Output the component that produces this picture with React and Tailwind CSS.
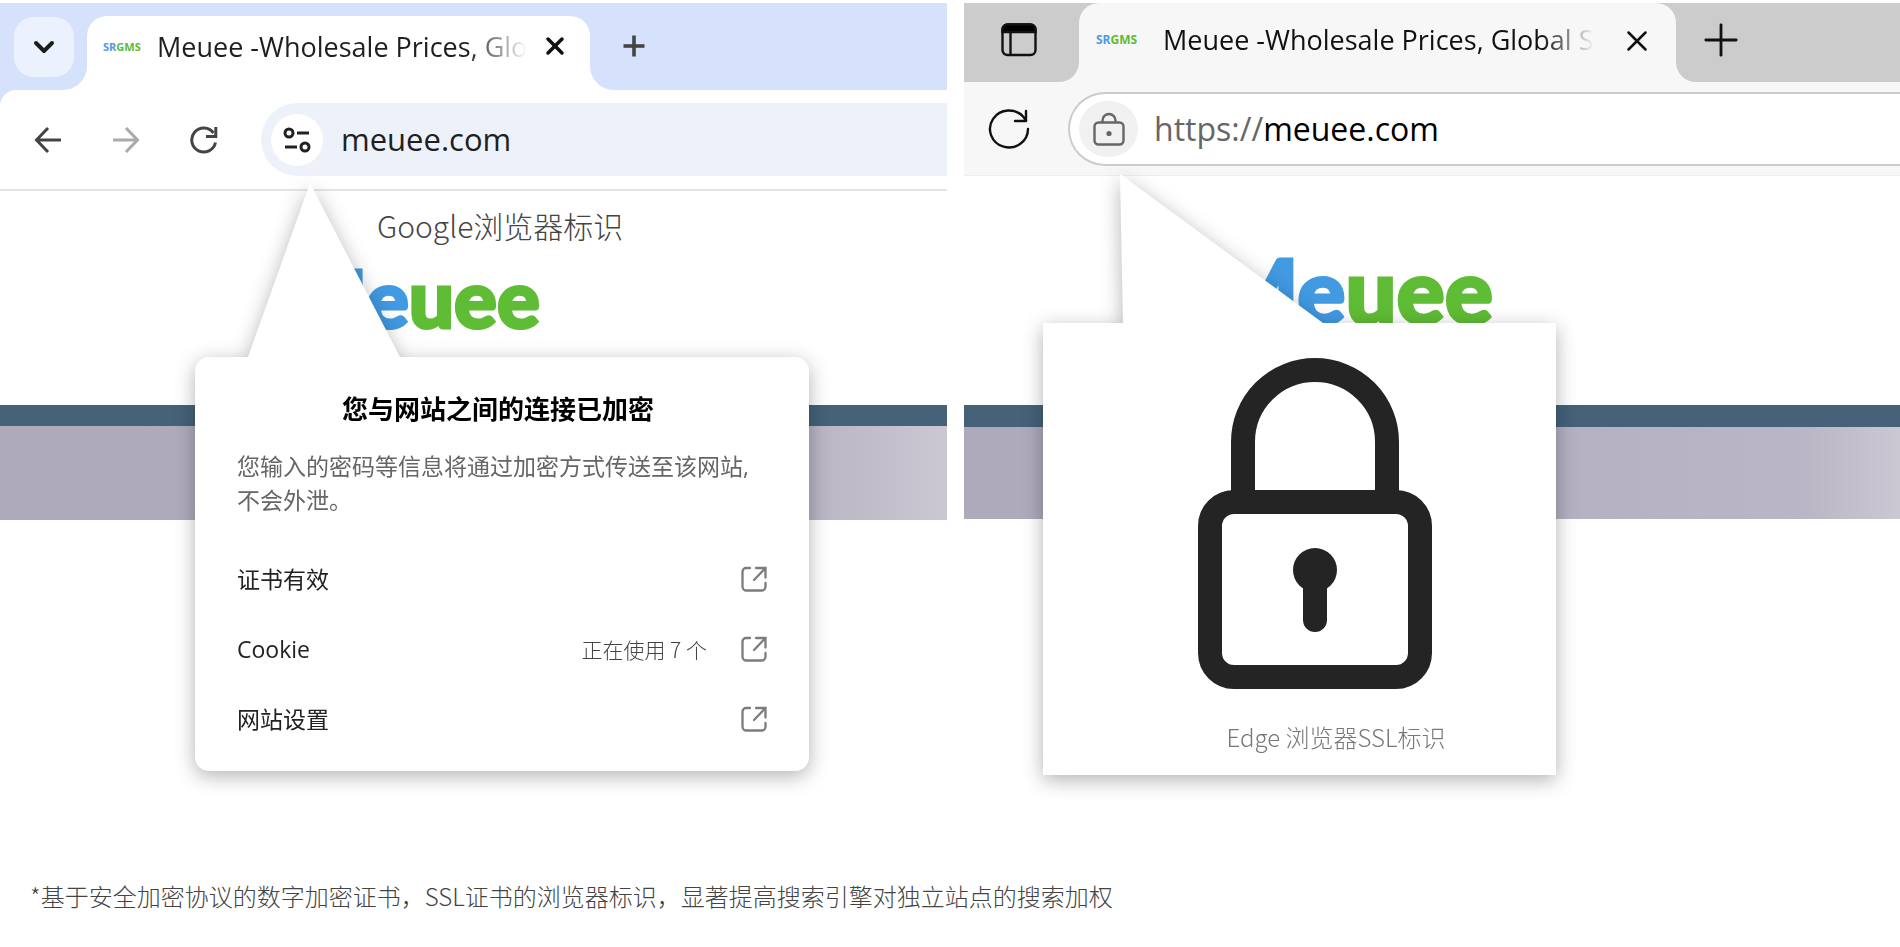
import { ChevronDown, Plus, X } from 'lucide-react';

const siteRows = [
  { label: '证书有效' },
  { label: 'Cookie', detail: '正在使用 7 个' },
  { label: '网站设置' },
];

function Favicon({ className }) {
  return (
    <span className={`shrink-0 font-['Open_Sans',sans-serif] leading-4 font-bold text-[#4a9be6] ${className}`}>
      SR<span className="text-[#5dbc32]">GMS</span>
    </span>
  );
}

function Logo({ className }) {
  return (
    <div className={`font-['Lato',sans-serif] font-black text-[#429ae2] [-webkit-text-stroke:3px_currentColor] [stroke-linejoin:round] ${className}`}>
      Me<span className="text-[#5fbc35]">uee</span>
    </div>
  );
}

function ArrowIcon({ className }) {
  return (
    <svg className={className} width="28" height="28" viewBox="0 0 28 28" fill="none" stroke="currentColor" strokeWidth="3" aria-hidden="true">
      <path d="M27 14H3M14 2 2.5 14 14 26" />
    </svg>
  );
}

function ChromeReloadIcon() {
  return (
    <svg width="28" height="28" viewBox="0 0 28 28" fill="none" stroke="#444" strokeWidth="3" aria-hidden="true">
      <path d="M25.5 16.5A12 12 0 1 1 23.5 7" />
      <path d="M25.8 1v9.5H16" />
    </svg>
  );
}

function EdgeReloadIcon() {
  return (
    <svg width="42" height="42" viewBox="0 0 42 42" fill="none" stroke="#111" strokeWidth="2.4" strokeLinecap="round" strokeLinejoin="round" aria-hidden="true">
      <path d="M40 21A19 18.5 0 1 1 35.5 9L38 12.500" />
      <path d="M38 3v10H27" />
    </svg>
  );
}

function TuneIcon() {
  return (
    <svg width="28" height="28" viewBox="0 0 28 28" fill="none" stroke="#222" strokeWidth="3" aria-hidden="true">
      <circle cx="6" cy="7" r="4" />
      <path d="M14 7h12M2 21h12" />
      <circle cx="22" cy="21" r="4" />
    </svg>
  );
}

function PanelIcon() {
  return (
    <svg width="36" height="34" viewBox="0 0 36 34" fill="none" stroke="#111" strokeWidth="2.4" aria-hidden="true">
      <rect x="1.5" y="1.5" width="33" height="30.5" rx="5" />
      <path d="M1.500 9V6a5 5 0 0 1 5-4.500h23a5 5 0 0 1 5 4.500v3z" fill="#000" />
      <path d="M9.5 9v23" />
    </svg>
  );
}

function SmallLockIcon() {
  return (
    <svg width="32" height="34" viewBox="0 0 32 34" fill="none" stroke="#666" strokeWidth="2.4" aria-hidden="true">
      <rect x="1.5" y="10.5" width="29" height="22" rx="4" />
      <path d="M9.5 10V8.500a6.500 6.500 0 0 1 13 0V10" />
      <circle cx="16" cy="21.5" r="2.6" fill="#666" stroke="none" />
    </svg>
  );
}

function OpenIcon() {
  return (
    <svg width="26" height="26" viewBox="0 0 26 26" fill="none" stroke="#7c7c7c" strokeWidth="2.3" strokeLinecap="round" aria-hidden="true">
      <path d="M9 2H5a3.500 3.500 0 0 0-3.500 3.500v15A4 4 0 0 0 5.500 24.500h15a4 4 0 0 0 4-4V17" />
      <path d="M15 2h9.500v9.500M24 2.500 13 14" />
    </svg>
  );
}

function BigLock() {
  return (
    <svg className="mx-auto" width="234" height="331" viewBox="0 0 234 331" fill="none" aria-label="SSL" role="img">
      <path d="M45 140V84a72 72 0 0 1 144 0v56" stroke="#242424" strokeWidth="24" />
      <rect x="12" y="144" width="210" height="175" rx="24" stroke="#242424" strokeWidth="24" />
      <circle cx="117" cy="212" r="22" fill="#242424" />
      <path d="M117 215v47" stroke="#242424" strokeWidth="24" strokeLinecap="round" />
    </svg>
  );
}

function ChromeBrowser() {
  return (
    <section className="relative min-w-0" aria-label="Google浏览器标识">
      <div className="flex h-[87px] bg-white">
        <div className="w-[87px] shrink-0 rounded-br-[24px] bg-[#d6e1fb] pt-[14px] pl-[14px]">
          <button type="button" aria-label="搜索标签页" className="flex size-[60px] items-center justify-center rounded-[20px] bg-[#ecf2fd]">
            <ChevronDown size={32} strokeWidth={3} color="#1c1c1c" />
          </button>
        </div>
        <div className="w-[503px] shrink-0 bg-[#d6e1fb] pt-[13px]">
          <div className="flex h-full items-start justify-between rounded-t-[20px] bg-white pr-[21px] pl-4">
            <div className="flex h-[62px] items-center gap-[18px]">
              <Favicon className="w-[36px] text-[11px]" />
              <span className="text-[27px] whitespace-nowrap text-[#1f1f1f] [mask-image:linear-gradient(to_right,black_84%,transparent)]">
                Meuee -Wholesale Prices, Glo
              </span>
            </div>
            <button type="button" aria-label="关闭标签页" className="flex h-[60px] items-center">
              <X size={28} strokeWidth={3} color="#111" />
            </button>
          </div>
        </div>
        <div className="flex-1 rounded-bl-[24px] bg-[#d6e1fb] pt-[25px] pl-[26px]">
          <button type="button" aria-label="新标签页" className="flex">
            <Plus size={36} strokeWidth={2.4} strokeLinecap="butt" color="#444" />
          </button>
        </div>
      </div>

      <div className="bg-[#d6e1fb]">
        <div className="flex h-[101px] items-start gap-[50px] rounded-tl-[16px] border-b-2 border-[#e4e4e4] bg-white pt-[13px] pl-[34px]">
          <button type="button" aria-label="返回" className="flex h-[73px] items-center text-[#444]">
            <ArrowIcon />
          </button>
          <button type="button" aria-label="前进" className="flex h-[73px] items-center text-[#aaa]">
            <ArrowIcon className="rotate-180" />
          </button>
          <button type="button" aria-label="重新加载" className="flex h-[73px] items-center">
            <ChromeReloadIcon />
          </button>
          <div className="-ml-[7px] flex h-[73px] flex-1 items-center gap-[18px] rounded-l-full bg-[#edf1fa] pl-[10px]">
            <button type="button" aria-label="查看网站信息" className="flex size-[52px] items-center justify-center rounded-full bg-white">
              <TuneIcon />
            </button>
            <input aria-label="Google地址栏" defaultValue="meuee.com" className="min-w-0 flex-1 bg-transparent text-[31px] text-[#1f1f1f] outline-none" />
          </div>
        </div>
      </div>

      <div className="h-[214px] pt-[12px]">
        <p className="pl-[377px] font-['Noto_Sans_CJK_SC',sans-serif] text-[30px] leading-[44px] font-light text-[#444]">Google浏览器标识</p>
        <Logo className="pt-[6px] pl-[291px] text-[80px] leading-[88px]" />
      </div>
      <div className="h-[21px] bg-[#456279]" />
      <div className="h-[94px] bg-linear-to-r from-[#aeaabb] from-15% via-[#b8b4c3] via-85% to-[#cbc7d3]" />

      <div className="absolute top-[180px] left-[195px] w-[614px] [filter:drop-shadow(0_5px_10px_rgba(0,0,0,0.3))]">
        <svg className="block" width="614" height="174" viewBox="0 0 614 174" aria-hidden="true">
          <path d="M115 0 205 174H53z" fill="#fff" />
        </svg>
        <div className="rounded-[14px] bg-white px-[42px] pt-[34px] pb-[17px] text-[23px] leading-[34px] text-[#222]">
          <h2 className="pr-[8px] text-center text-[26px] leading-[36px] font-bold text-black">您与网站之间的连接已加密</h2>
          <p className="mt-[22px] text-[#666]">
            您输入的密码等信息将通过加密方式传送至该网站, 不会外泄。
          </p>
          <ul className="mt-[27px]">
            {siteRows.map(({ label, detail }) => (
              <li key={label} className="flex h-[70px] items-center">
                <span className="flex-1">{label}</span>
                {detail && <span className="mr-[34px] font-['Noto_Sans_CJK_SC',sans-serif] text-[21px] font-light text-[#444]">{detail}</span>}
                <button type="button" aria-label={label}>
                  <OpenIcon />
                </button>
              </li>
            ))}
          </ul>
        </div>
      </div>
    </section>
  );
}

function EdgeBrowser() {
  return (
    <section className="relative min-w-0" aria-label="Edge 浏览器SSL标识">
      <div className="flex h-[79px] bg-[#f7f7f7]">
        <div className="w-[115px] shrink-0 rounded-br-[20px] bg-[#ccc] pt-[20px] pl-[37px]">
          <button type="button" aria-label="标签页操作菜单" className="flex">
            <PanelIcon />
          </button>
        </div>
        <div className="w-[597px] shrink-0 bg-[#ccc]">
          <div className="flex h-full items-start justify-between rounded-t-[20px] bg-[#f7f7f7] pr-[22px] pl-[17px]">
            <div className="flex h-[74px] items-center gap-[27px]">
              <Favicon className="w-[40px] text-[12px]" />
              <span className="text-[27px] whitespace-nowrap text-[#111] [mask-image:linear-gradient(to_right,black_88%,transparent)]">
                Meuee -Wholesale Prices, Global S
              </span>
            </div>
            <button type="button" aria-label="关闭标签页" className="flex h-[76px] items-center">
              <X size={34} strokeWidth={1.8} color="#111" />
            </button>
          </div>
        </div>
        <div className="flex-1 rounded-bl-[20px] bg-[#ccc] pt-[11px] pl-[19px]">
          <button type="button" aria-label="新标签页" className="flex">
            <Plus size={52} strokeWidth={1.3} color="#111" />
          </button>
        </div>
      </div>

      <div className="flex h-[94px] items-start gap-[38px] border-b border-[#eee] bg-[#f7f7f7] pt-[10px] pl-[24px]">
        <button type="button" aria-label="刷新" className="flex h-[74px] items-center">
          <EdgeReloadIcon />
        </button>
        <div className="flex h-[74px] flex-1 items-center gap-[16px] rounded-l-full border-y-2 border-l-2 border-[#ccc] bg-white pl-[9px]">
          <button type="button" aria-label="查看站点信息" className="flex h-[56px] w-[59px] items-center justify-center rounded-full bg-[#f1f1f1]">
            <SmallLockIcon />
          </button>
          <label className="flex min-w-0 flex-1 items-center text-[32px] text-[#666]">
            https://
            <input aria-label="Edge地址栏" defaultValue="meuee.com" className="min-w-0 flex-1 bg-transparent text-black outline-none" />
          </label>
        </div>
      </div>

      <div className="h-[229px]">
        <Logo className="pt-[65px] pl-[249px] text-[90px] leading-[96px]" />
      </div>
      <div className="relative h-[22px] bg-[#456279]" />
      <div className="h-[92px] bg-linear-to-r from-[#aeaabb] from-30% via-[#bab6c5] via-90% to-[#cbc7d3]" />

      <div className="absolute top-[171px] left-[79px] w-[513px] [filter:drop-shadow(0_5px_10px_rgba(0,0,0,0.3))]">
        <svg className="block" width="513" height="149" viewBox="0 0 513 149" aria-hidden="true">
          <path d="M77 0 280 149H80z" fill="#fff" />
        </svg>
        <div className="bg-white pt-[35px] pb-[20px]">
          <div className="pl-[31px]">
            <BigLock />
          </div>
          <p className="mt-[30px] pl-[73px] text-center font-['Noto_Sans_CJK_SC',sans-serif] text-[24px] leading-[36px] font-light text-[#777]">Edge 浏览器SSL标识</p>
        </div>
      </div>
    </section>
  );
}

export default function App() {
  return (
    <main className="flex min-h-screen flex-col justify-between bg-white pt-[3px] pb-[33px] font-['Open_Sans','Noto_Sans_CJK_SC',sans-serif]">
      <div className="grid grid-cols-[947fr_936fr] gap-[17px]">
        <ChromeBrowser />
        <EdgeBrowser />
      </div>
      <p className="px-[30px] font-['Noto_Sans_CJK_SC',sans-serif] text-[24px] leading-[36px] font-light text-[#444]">
        *基于安全加密协议的数字加密证书，SSL证书的浏览器标识，显著提高搜索引擎对独立站点的搜索加权
      </p>
    </main>
  );
}
